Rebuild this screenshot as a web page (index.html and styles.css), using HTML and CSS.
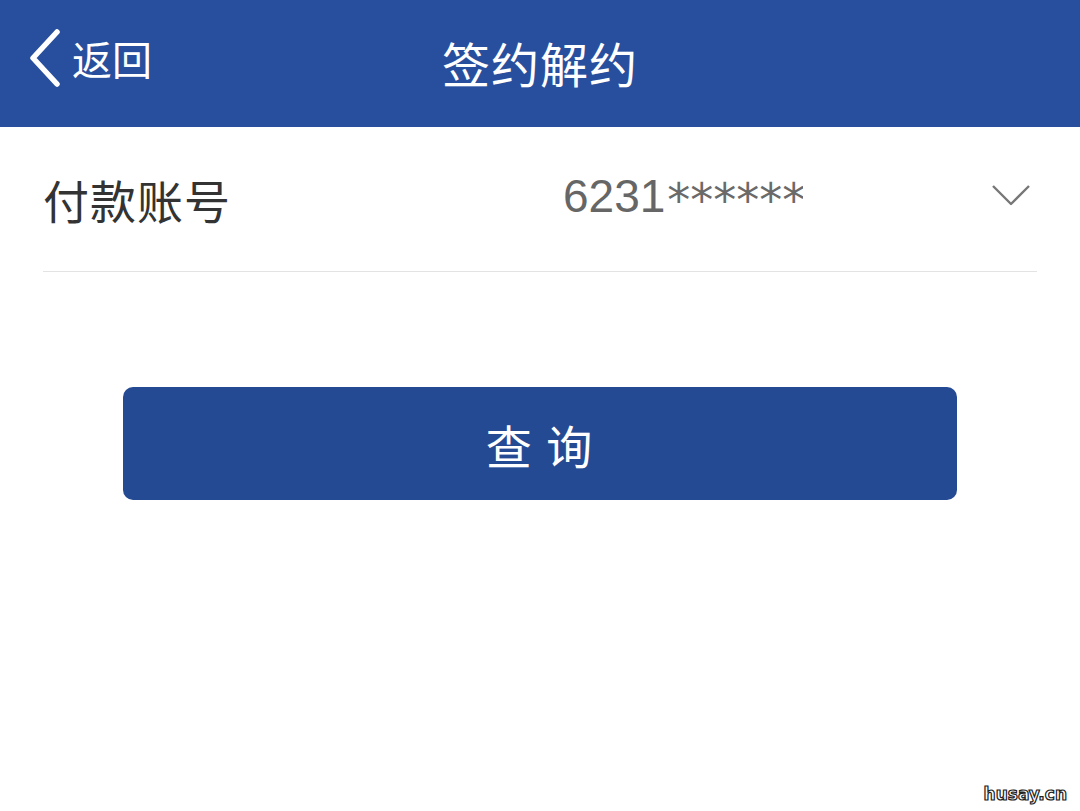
FILE: index.html
```html
<!DOCTYPE html>
<html lang="zh-CN">
<head>
<meta charset="utf-8">
<link rel="stylesheet" href="styles.css">
</head>
<body>
<div class="page">
  <header class="topbar">
    <div class="back">
      <svg class="back-icon" width="34" height="58" viewBox="0 0 34 58"><polyline points="29,3 5,29 29,55" fill="none" stroke="#ffffff" stroke-width="5.5" stroke-linecap="round" stroke-linejoin="round"/></svg>
      <span class="back-text">返回</span>
    </div>
    <h1 class="title">签约解约</h1>
  </header>
  <section class="form">
    <div class="row">
      <span class="label">付款账号</span>
      <span class="value">6231<span class="mask">*******</span></span>
      <svg class="chev" width="40" height="24" viewBox="0 0 40 24"><polyline points="2,3 20,21 38,3" fill="none" stroke="#777" stroke-width="2.4" stroke-linejoin="round"/></svg>
    </div>
  </section>
  <div class="actions">
    <button class="btn">查 询</button>
  </div>
  <div class="watermark">husay.cn</div>
</div>
</body>
</html>
```
FILE: styles.css
```css
html, body {
  margin: 0;
  padding: 0;
  background: #ffffff;
}
body {
  font-family: "Noto Sans CJK SC", "Noto Sans", sans-serif;
}
.page {
  position: relative;
  width: 1080px;
  height: 811px;
  overflow: hidden;
  background: #ffffff;
}
.topbar {
  position: relative;
  height: 127px;
  background: #284f9e;
  display: flex;
  align-items: center;
  justify-content: center;
}
.back {
  position: absolute;
  left: 28px;
  top: 29px;
  display: flex;
  align-items: center;
  gap: 10px;
}
.back-icon {
  display: block;
}
.back-text {
  color: #ffffff;
  font-size: 40px;
  line-height: 58px;
}
.title {
  margin: 0;
  color: #ffffff;
  font-size: 48px;
  font-weight: 400;
  line-height: 60px;
  letter-spacing: 1px;
  margin-top: -4px;
}
.form {
  padding: 0 43px;
}
.row {
  height: 144px;
  border-bottom: 1.5px solid #e3e3e3;
  display: flex;
  align-items: center;
}
.label {
  font-size: 46px;
  color: #333333;
  width: 520px;
  letter-spacing: 1px;
}
.value {
  width: 240px;
  overflow: hidden;
  white-space: nowrap;
  font-family: "Liberation Sans", Arial, sans-serif;
  font-size: 46px;
  color: #666666;
  margin-top: -2px;
}
.mask {
  font-family: "DejaVu Sans", sans-serif;
  font-size: 46px;
  color: #6a6a6a;
  margin-left: 2px;
  vertical-align: -4px;
}
.chev {
  margin-left: auto;
  margin-right: 6px;
  margin-top: -8px;
}
.actions {
  padding: 115px 123px 0;
}
.btn {
  display: block;
  width: 100%;
  height: 113px;
  border: none;
  border-radius: 10px;
  background: #244a94;
  color: #ffffff;
  font-family: "Noto Sans CJK SC", sans-serif;
  font-size: 46px;
  letter-spacing: 2px;
  padding: 0;
}
.watermark {
  position: absolute;
  right: 13px;
  bottom: 7px;
  font-family: "DejaVu Sans", sans-serif;
  font-weight: 700;
  font-size: 17px;
  color: #ffffff;
  -webkit-text-stroke: 1.2px #222;
}
```
